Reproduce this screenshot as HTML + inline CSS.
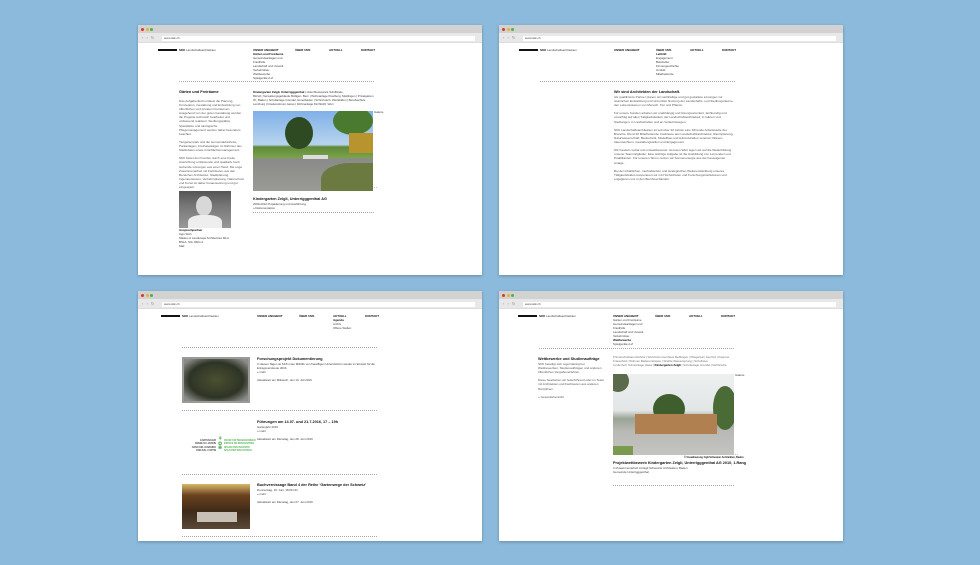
<!DOCTYPE html>
<html><head><meta charset="utf-8"><style>
*{margin:0;padding:0;box-sizing:border-box}
body{width:980px;height:565px;background:#8cbadc;position:relative;overflow:hidden;font-family:"Liberation Sans",sans-serif;color:#333}
.win{position:absolute;width:344px;height:250px;background:#fff;box-shadow:0 1px 3px rgba(0,0,0,.25);overflow:hidden}
.tb{position:absolute;left:0;top:0;width:100%;height:8px;background:#d2d2d2}
.dot{position:absolute;top:2.5px;width:3.2px;height:3.2px;border-radius:50%}
.ab{position:absolute;left:0;top:8px;width:100%;height:10px;background:#e8e8e8;border-bottom:1px solid #ddd}
.url{position:absolute;left:24px;top:2.5px;right:7px;height:5px;background:#fff;font-size:3px;line-height:5px;padding-left:2px;color:#444}
.nv{position:absolute;left:4px;top:3px;font-size:4px;line-height:4px;color:#888;letter-spacing:1px}
.a{position:absolute;font-size:3px;line-height:4.1px;color:#444;white-space:nowrap;letter-spacing:-0.05px}
.b{font-weight:bold;color:#111}
.h{position:absolute;font-size:3.8px;font-weight:bold;color:#111;white-space:nowrap}
.logo{position:absolute;left:20px;top:24px;width:19px;height:1.6px;background:#111}
.dash{position:absolute;height:0;border-top:1px dotted #aaa}
.p{position:absolute;font-size:3.1px;line-height:4.1px;color:#555}
</style></head><body>

<!-- TL -->
<div class="win" style="left:138px;top:25px">
<div class="tb"><div class="dot" style="left:3px;background:#d9362d"></div><div class="dot" style="left:7.5px;background:#e9b526"></div><div class="dot" style="left:12px;background:#4fae4d"></div></div>
<div class="ab"><div class="nv">‹ › ↻</div><div class="url">www.skk.ch</div></div>
<div class="logo"></div><div class="a" style="left:41px;top:22.5px"><span class="b">SKK</span> Landschaftsarchitekten</div>
<div class="a" style="left:115px;top:22.5px"><span class="b">UNSER ANGEBOT</span><br><span class="b">Gärten und Freiräume</span><br>Gemeindeanlagen und<br>Friedhöfe<br>Landschaft und Umwelt<br>Verkehrsbau<br>Wettbewerbe<br>Spielgeräte A-Z</div>
<div class="a b" style="left:157px;top:22.5px">ÜBER UNS</div>
<div class="a b" style="left:191px;top:22.5px">AKTUELL</div>
<div class="a b" style="left:223px;top:22.5px">KONTAKT</div>
<div class="dash" style="left:41px;width:195px;top:56px"></div>
<div class="h" style="left:41px;top:65px">Gärten und Freiräume</div>
<div class="p" style="left:41px;top:74px;width:66px">Das Aufgabenfeld umfasst die Planung, Konzeption, Gestaltung und Entwicklung von öffentlichen und privaten Freiräumen. Ausgehend von der guten Gestaltung werden die Projekte technisch bearbeitet und umfassend realisiert. Siedlungsplätze, Spielplätze und ökologische Pflegemanagement werden dabei besonders beachtet.<br><br>Tiergartenpark und die Gemeindebetriebe, Parkanlagen, Freizeitanlagen im Rahmen des Städtebaus sowie Grünflächenmanagement.<br><br>SKK bietet den Kunden durch eine breite Ausrichtung umfassende und qualitativ hoch stehende Lösungen aus einer Hand. Die enge Zusammenarbeit mit Fachleuten aus den Bereichen Architektur, Stadtplanung, Ingenieurwesen, Verkehrsplanung, Naturschutz und Kunst ist dabei Voraussetzung und gut eingespielt.</div>
<div style="position:absolute;left:41px;top:166px;width:52px;height:37px;background:linear-gradient(#555,#777 40%,#999);overflow:hidden"><div style="position:absolute;left:17px;top:5px;width:16px;height:20px;border-radius:50%;background:#d8d8d8"></div><div style="position:absolute;left:9px;top:24px;width:34px;height:16px;border-radius:40% 40% 0 0;background:#eee"></div></div>
<div class="a" style="left:41px;top:203px"><span class="b">Ansprechpartner</span><br>Ingo Stöh<br>Master of Landscape Architecture MLA<br>BSLA, SIA, REG A<br>Mail</div>
<div class="a" style="left:115px;top:65px"><span class="b">Kindergarten Zelgli, Unterrigggenthal</span> | Hotel Restaurant Schiffände,<br>Birrwil | Verwaltungsgebäude Bolligen, Bern | Wohnanlage Klostberg, Mettlingen | Privatgarten<br>W., Baden | Schulanlage Grendel, Ennetbaden | Schinznach, Weinfelden | Berufsschule<br>Lenzburg | Friedensforum Aarau | Wohnanlage Kirchbühl, Wuri</div>
<div style="position:absolute;left:115px;top:86px;width:120px;height:80px;overflow:hidden;background:linear-gradient(#7fb0e8 0%,#b8d4ee 42%,#5f8a3a 45%,#7aa24a 58%,#8a8a88 60%,#9a9a96 100%)">
<div style="position:absolute;left:32px;top:6px;width:28px;height:32px;border-radius:50%;background:#2e4a22"></div>
<div style="position:absolute;left:80px;top:-4px;width:40px;height:28px;border-radius:50%;background:#4a7a30"></div>
<div style="position:absolute;left:96px;top:22px;width:24px;height:20px;background:#b8942e"></div>
<div style="position:absolute;left:68px;top:52px;width:58px;height:32px;border-radius:50% 0 0 0;background:#6a7a40"></div>
<div style="position:absolute;left:50px;top:44px;width:25px;height:4px;background:#ddd"></div>
</div>
<div class="a" style="left:236px;top:85px">Galerie</div>
<div class="a" style="left:236px;top:160px">‹ ›</div>
<div class="h" style="left:115px;top:172px">Kindergarten Zelgli, Unterrigggenthal AG</div>
<div class="a" style="left:115px;top:177px">2009-2012 Projektierung und Ausführung<br>» Dokumentation</div>
<div class="dash" style="left:115px;width:121px;top:187px"></div>
</div>

<!-- TR -->
<div class="win" style="left:499px;top:25px">
<div class="tb"><div class="dot" style="left:3px;background:#d9362d"></div><div class="dot" style="left:7.5px;background:#e9b526"></div><div class="dot" style="left:12px;background:#4fae4d"></div></div>
<div class="ab"><div class="nv">‹ › ↻</div><div class="url">www.skk.ch</div></div>
<div class="logo"></div><div class="a" style="left:41px;top:22.5px"><span class="b">SKK</span> Landschaftsarchitekten</div>
<div class="a b" style="left:115px;top:22.5px">UNSER ANGEBOT</div>
<div class="a" style="left:157px;top:22.5px"><span class="b">ÜBER UNS</span><br><span class="b">Leitbild</span><br>Engagement<br>Bürokultur<br>Firmengeschichte<br>Umfeld<br>Mitarbeitende</div>
<div class="a b" style="left:191px;top:22.5px">AKTUELL</div>
<div class="a b" style="left:223px;top:22.5px">KONTAKT</div>
<div class="dash" style="left:41px;width:195px;top:56px"></div>
<div class="h" style="left:115px;top:65px">Wir sind Architekten der Landschaft.</div>
<div class="p" style="left:115px;top:70px;width:122px">Als qualifizierte Partner planen wir nachhaltige und gut gestaltete Lösungen zur räumlichen Entwicklung und sinnvollen Nutzung der Landschafts- und Siedlungsräume, den Lebensräumen von Mensch, Tier und Pflanze.<br><br>Für unsere Kunden arbeiten wir unabhängig und lösungsorientiert, fachkundig und umsichtig auf allen Tätigkeitsfeldern der Landschaftsarchitektur, in Gärten und Siedlungen, in Landschaften und an Verkehrswegen.<br><br>SKK Landschaftsarchitekten ist seit über 40 Jahren eine führende Arbeitsstelle der Branche. Rund 20 Mitarbeitende: Fachleute aus Landschaftsarchitektur, Raumplanung, Naturwissenschaft, Bautechnik, Modellbau und Administration vereinen Wissen, Ideenreichtum, Gestaltungswillen und Engagement.<br><br>Wir handeln sozial und umweltbewusst. Grossen Wert legen wir auf die Weiterbildung unserer Teammitglieder. Eine wichtige Aufgabe ist die Ausbildung von Lernenden und Praktikanten. Für unseren Strom nutzen wir Sonnenenergie aus der hauseigenen Anlage.<br><br>Bei der inhaltlichen, methodischen und strategischen Weiterentwicklung unseres Tätigkeitsfeldes kooperieren wir mit Hochschulen und Forschungsinstitutionen und engagieren uns in den Berufsverbänden.</div>
</div>

<!-- BL -->
<div class="win" style="left:138px;top:291px">
<div class="tb"><div class="dot" style="left:3px;background:#d9362d"></div><div class="dot" style="left:7.5px;background:#e9b526"></div><div class="dot" style="left:12px;background:#4fae4d"></div></div>
<div class="ab"><div class="nv">‹ › ↻</div><div class="url">www.skk.ch</div></div>
<div class="logo" style="left:23px"></div><div class="a" style="left:44px;top:22.5px"><span class="b">SKK</span> Landschaftsarchitekten</div>
<div class="a b" style="left:119px;top:22.5px">UNSER ANGEBOT</div>
<div class="a b" style="left:161px;top:22.5px">ÜBER UNS</div>
<div class="a" style="left:195px;top:22.5px"><span class="b">AKTUELL</span><br><span class="b">Agenda</span><br>Archiv<br>Offene Stellen</div>
<div class="a b" style="left:227px;top:22.5px">KONTAKT</div>
<div class="dash" style="left:44px;width:195px;top:56px"></div>
<div style="position:absolute;left:44px;top:66px;width:68px;height:46px;background:radial-gradient(#4a5030,#2e3426 60%,#8a8c88 90%);border:2px solid #9a9a96"></div>
<div class="h" style="left:119px;top:66px">Forschungsprojekt Dokumentierung</div>
<div class="a" style="left:119px;top:71px">In diesen Tagen ist SKK unter Mithilfe von freiwilligen Unterstützern wieder im Einsatz für die<br>Ertragsverstreute 2016.<br>» mehr<br><br>Aktualisiert am Mittwoch, den 13. Juli 2016</div>
<div class="dash" style="left:44px;width:195px;top:119px"></div>
<div class="a" style="left:45px;top:148px;font-size:2.4px;line-height:3.3px;text-align:right;width:33px;font-weight:bold;color:#555">GARTENJAHR<br>ANNEE DU JARDIN<br>ANNO DEL GIARDINO<br>ONN DAL CURTIN</div>
<div class="a" style="left:80px;top:146px;font-size:5px;color:#5bb55b;font-weight:bold;line-height:4.5px">⚘<br>✿<br>❀</div>
<div class="a" style="left:86px;top:148px;font-size:2.4px;line-height:3.3px;color:#5bb55b;font-weight:bold">RAUM FÜR BEGEGNUNGEN<br>ESPACE DE RENCONTRES<br>SPAZIO PER INCONTRI<br>SPAZI PER INSCUNTRAS</div>
<div class="h" style="left:119px;top:129px">Führungen am 14.07. und 21.7.2016, 17 – 19h</div>
<div class="a" style="left:119px;top:134px">Gartenjahr 2016<br>» mehr<br><br>Aktualisiert am Dienstag, den 28. Juni 2016</div>
<div class="dash" style="left:44px;width:195px;top:183px"></div>
<div style="position:absolute;left:44px;top:193px;width:68px;height:45px;overflow:hidden;background:linear-gradient(#d9b86a 0%,#6a4220 25%,#3e2a18 60%,#5a4838 100%)"><div style="position:absolute;left:15px;top:28px;width:40px;height:10px;background:#c8c0b4"></div></div>
<div class="h" style="left:119px;top:192px">Buchvernissage Band 4 der Reihe 'Gartenwege der Schweiz'</div>
<div class="a" style="left:119px;top:197px">Donnerstag, 16. Juni, 18:00 Uhr<br>» mehr<br><br>Aktualisiert am Dienstag, den 07. Juni 2016</div>
<div class="dash" style="left:44px;width:195px;top:245px"></div>
</div>

<!-- BR -->
<div class="win" style="left:499px;top:291px">
<div class="tb"><div class="dot" style="left:3px;background:#d9362d"></div><div class="dot" style="left:7.5px;background:#e9b526"></div><div class="dot" style="left:12px;background:#4fae4d"></div></div>
<div class="ab"><div class="nv">‹ › ↻</div><div class="url">www.skk.ch</div></div>
<div class="logo" style="left:19px"></div><div class="a" style="left:40px;top:22.5px"><span class="b">SKK</span> Landschaftsarchitekten</div>
<div class="a" style="left:114px;top:22.5px"><span class="b">UNSER ANGEBOT</span><br>Gärten und Freiräume<br>Gemeindeanlagen und<br>Friedhöfe<br>Landschaft und Umwelt<br>Verkehrsbau<br><span class="b">Wettbewerbe</span><br>Spielgeräte A-Z</div>
<div class="a b" style="left:156px;top:22.5px">ÜBER UNS</div>
<div class="a b" style="left:190px;top:22.5px">AKTUELL</div>
<div class="a b" style="left:222px;top:22.5px">KONTAKT</div>
<div class="dash" style="left:40px;width:195px;top:57px"></div>
<div class="h" style="left:39px;top:66px">Wettbewerbe und Studienaufträge</div>
<div class="p" style="left:39px;top:71px;width:68px">SKK beteiligt sich regelmässig bei Wettbewerben, Studienaufträgen und anderen öffentlichen Vergabeverfahren.<br><br>Diese bearbeiten wir federführend oder im Team mit Architekten und Fachleuten aus anderen Disziplinen.<br><br>» Gesamtübersicht</div>
<div class="a" style="left:114px;top:64px;color:#777">Primarschulhaus Rothrist | Wohnheim Isenhaus Mettlingen | Pflegeheim Gerchof | Kaserne<br>Frauenfeld | Wohnen Badenerstrasse | Strahle Wiesensprung | Schulhaus<br>Lindenhof | Schulanlage Hasel | <span class="b">Kindergarten Zelgli</span> | Schulanlage Grendel | Rehbrücke</div>
<div style="position:absolute;left:114px;top:83px;width:121px;height:81px;overflow:hidden;background:linear-gradient(#eef0f0 0%,#e2e6e6 45%,#9aa496 55%,#b8b8b4 70%,#c4c4c0 100%)">
<div style="position:absolute;left:40px;top:20px;width:32px;height:30px;border-radius:50%;background:#3e5e2e"></div>
<div style="position:absolute;left:100px;top:12px;width:24px;height:44px;border-radius:50%;background:#4a6a36"></div>
<div style="position:absolute;left:-6px;top:-4px;width:22px;height:22px;border-radius:50%;background:#5a6a4a"></div>
<div style="position:absolute;left:22px;top:40px;width:82px;height:20px;background:#b08050"></div>
<div style="position:absolute;left:0;top:72px;width:20px;height:10px;background:#7a9a50"></div>
</div>
<div class="a" style="left:236px;top:82px">Galerie</div>
<div class="a" style="left:236px;top:161px">‹ ›</div>
<div class="a b" style="left:185px;top:165px;font-size:2.5px">© Visualisierung: Egli Schweizer Architekten, Baden</div>
<div class="h" style="left:114px;top:170px">Projektwettbewerb Kindergarten Zelgli, Unterrigggenthal AG 2010, 1.Rang</div>
<div class="a" style="left:114px;top:175px">In Zusammenarbeit mit Egli Schweizer Architekten, Baden<br>Gemeinde Unterrigggenthal</div>
<div class="dash" style="left:114px;width:121px;top:194px"></div>
</div>
</body></html>
